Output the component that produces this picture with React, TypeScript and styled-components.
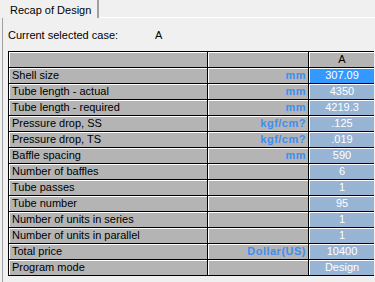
import React from "react";
import styled, { createGlobalStyle } from "styled-components";

const Global = createGlobalStyle`
  html, body { margin: 0; padding: 0; background: #f0f0f0; }
  body { font-family: "Liberation Sans", Arial, sans-serif; font-size: 11px; color: #000; }
`;

const Window = styled.div`
  width: 375px;
  height: 282px;
  background: #f0f0f0;
  display: flex;
  flex-direction: column;
  overflow: hidden;
`;

const TabStrip = styled.div`
  display: flex;
  height: 18px;
`;

const Tab = styled.div`
  width: 99px;
  height: 18px;
  box-sizing: border-box;
  padding: 4px 0 0 10px;
  border-right: 2px solid #a0a0a0;
  background: #f0f0f0;
  font-size: 11px;
  line-height: 12px;
  white-space: nowrap;
`;

const TabRest = styled.div`
  flex: 1;
  border-bottom: 1px solid #ffffff;
`;

const Pane = styled.div`
  flex: 1;
  border-left: 1px solid #a0a0a0;
  margin-left: 2px;
  padding: 11px 0 0 5px;
`;

const CaseLine = styled.div`
  display: flex;
  height: 22px;
  font-size: 11px;
  line-height: 12px;
`;

const CaseLabel = styled.span`
  width: 147px;
`;

const Table = styled.div`
  display: grid;
  grid-template-columns: 198px 100px 65px;
  grid-auto-rows: 15px;
  gap: 1px;
  width: 366px;
  box-sizing: border-box;
  border: 1px solid #000;
  background: #000;
`;

type Kind = "label" | "unit" | "value" | "active" | "head";

const Cell = styled.div<{ $kind?: Kind }>`
  box-sizing: border-box;
  border-top: 1px solid #fff;
  border-left: 1px solid #fff;
  background: ${(p) =>
    p.$kind === "value" ? "#98b4d4" : p.$kind === "active" ? "#3399ff" : "#b4b4b4"};
  color: ${(p) =>
    p.$kind === "value" || p.$kind === "active" ? "#fff" : p.$kind === "unit" ? "#3d8ef5" : "#000"};
  font-weight: ${(p) => (p.$kind === "unit" ? 700 : 400)};
  letter-spacing: ${(p) => (p.$kind === "unit" ? "0.5px" : "0")};
  text-align: ${(p) => (p.$kind === "unit" ? "right" : p.$kind === "label" ? "left" : "center")};
  padding: 0 2px;
  font-size: 11px;
  line-height: 13px;
  white-space: nowrap;
  overflow: hidden;
`;

type Row = { label: string; unit?: string; value: string };

const rows: Row[] = [
  { label: "Shell size", unit: "mm", value: "307.09" },
  { label: "Tube length - actual", unit: "mm", value: "4350" },
  { label: "Tube length - required", unit: "mm", value: "4219.3" },
  { label: "Pressure drop, SS", unit: "kgf/cm?", value: ".125" },
  { label: "Pressure drop, TS", unit: "kgf/cm?", value: ".019" },
  { label: "Baffle spacing", unit: "mm", value: "590" },
  { label: "Number of baffles", value: "6" },
  { label: "Tube passes", value: "1" },
  { label: "Tube number", value: "95" },
  { label: "Number of units in series", value: "1" },
  { label: "Number of units in parallel", value: "1" },
  { label: "Total price", unit: "Dollar(US)", value: "10400" },
  { label: "Program mode", value: "Design" },
];

export default function App() {
  return (
    <Window>
      <Global />
      <TabStrip>
        <Tab>Recap of Design</Tab>
        <TabRest />
      </TabStrip>
      <Pane>
        <CaseLine>
          <CaseLabel>Current selected case:</CaseLabel>
          <span>A</span>
        </CaseLine>
        <Table>
          <Cell $kind="head" />
          <Cell $kind="head" />
          <Cell $kind="head">A</Cell>
          {rows.map((r, i) => (
            <React.Fragment key={r.label}>
              <Cell $kind="label">{r.label}</Cell>
              <Cell $kind="unit">{r.unit ?? ""}</Cell>
              <Cell $kind={i === 0 ? "active" : "value"}>{r.value}</Cell>
            </React.Fragment>
          ))}
        </Table>
      </Pane>
    </Window>
  );
}
